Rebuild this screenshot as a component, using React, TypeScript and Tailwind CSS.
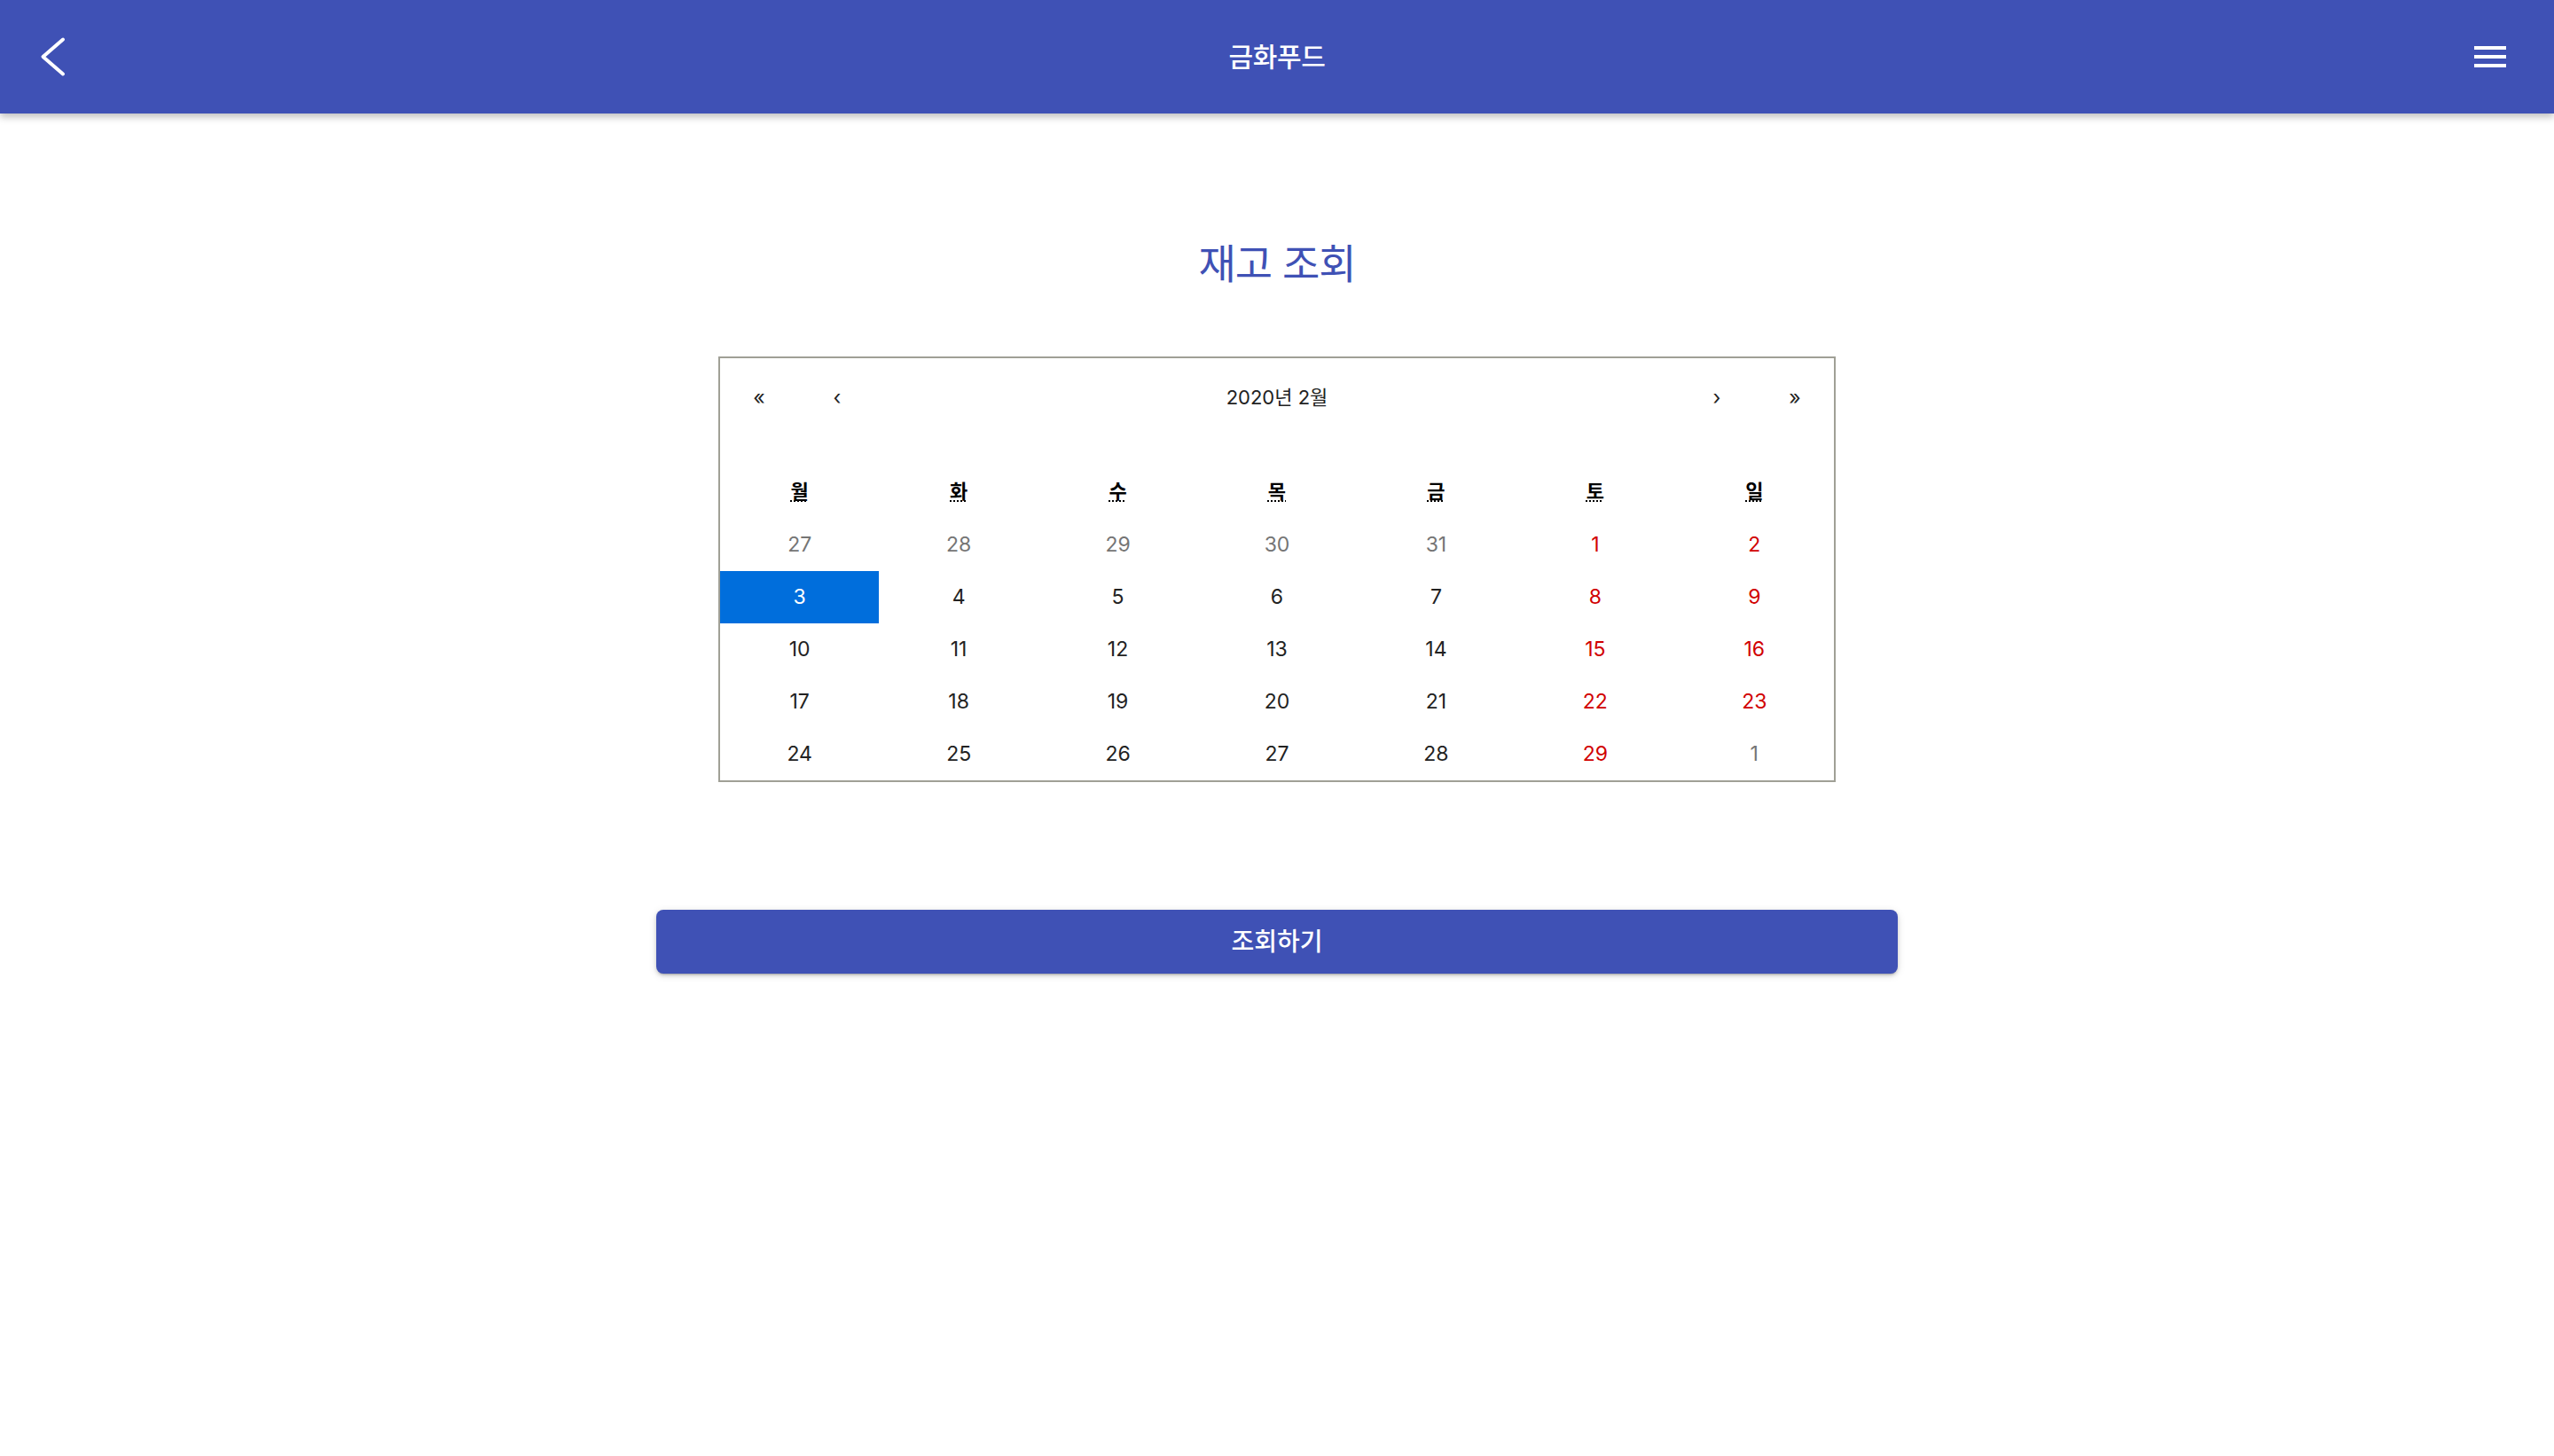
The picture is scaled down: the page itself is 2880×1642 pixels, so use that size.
import React, { useState } from 'react';

const weekdays = ['월', '화', '수', '목', '금', '토', '일'];
const weekdayFull = ['월요일', '화요일', '수요일', '목요일', '금요일', '토요일', '일요일'];

interface Day {
  date: number;
  inMonth: boolean;
}

// 2020년 2월, 월요일 시작
const buildDays = (): Day[] => {
  const days: Day[] = [];
  [27, 28, 29, 30, 31].forEach(d => days.push({ date: d, inMonth: false }));
  for (let d = 1; d <= 29; d++) days.push({ date: d, inMonth: true });
  days.push({ date: 1, inMonth: false });
  return days;
};

const font = { fontFamily: 'Inter, "Noto Sans CJK KR", sans-serif' };

const App: React.FC = () => {
  const [selected, setSelected] = useState(3);
  const days = buildDays();

  return (
    <div className="min-h-screen bg-white" style={font}>
      <header className="relative z-10 grid h-[128px] grid-cols-[1fr_auto_1fr] items-center bg-[#3f51b5] pl-[36px] pr-[48px] text-white shadow-[0_4px_8px_rgba(0,0,0,0.25)]">
        <button className="flex h-[48px] w-[48px] items-center justify-center justify-self-start">
          <svg width="48" height="48" viewBox="0 0 48 48" fill="none">
            <polyline points="35,4.5 12.5,24 35,43.5" stroke="white" strokeWidth="4" strokeLinecap="round" strokeLinejoin="round" />
          </svg>
        </button>
        <h1 className="ml-[12px] text-[30px] font-medium leading-none tracking-[-0.3px]">금화푸드</h1>
        <button className="flex h-[48px] w-[48px] items-center justify-center justify-self-end">
          <svg width="48" height="48" viewBox="0 0 48 48" fill="white">
            <rect x="6" y="12" width="36" height="4" />
            <rect x="6" y="22" width="36" height="4" />
            <rect x="6" y="32" width="36" height="4" />
          </svg>
        </button>
      </header>

      <main className="flex flex-col items-center">
        <h2 className="mt-[142px] text-[46px] leading-[55px] tracking-[-1px] text-[#3f51b5]">재고 조회</h2>

        <div className="mt-[77px] w-[1260px] border-2 border-[#a0a096] bg-white text-[23px] leading-none text-[#222]">
          <div className="mb-[32px] flex h-[88px] items-center">
            <button className="h-full w-[88px]">«</button>
            <button className="h-full w-[88px]">‹</button>
            <button className="h-full flex-1 text-[22px]">2020년 2월</button>
            <button className="h-full w-[88px]">›</button>
            <button className="h-full w-[88px]">»</button>
          </div>

          <div className="grid h-[61px] grid-cols-7 items-center pb-[2px]">
            {weekdays.map((w, i) => (
              <div key={w} className="text-center text-[22px] font-bold text-black">
                <abbr title={weekdayFull[i]} className="underline decoration-dotted decoration-2 underline-offset-[3px]">
                  {w}
                </abbr>
              </div>
            ))}
          </div>

          <div className="grid grid-cols-7">
            {days.map((d, i) => {
              const col = i % 7;
              const isSelected = d.inMonth && d.date === selected;
              let color = 'text-[#222]';
              if (!d.inMonth) color = 'text-[#757575]';
              else if (col >= 5) color = 'text-[#d10000]';
              if (isSelected) color = 'text-white bg-[#006edc]';
              return (
                <button
                  key={i}
                  onClick={() => d.inMonth && setSelected(d.date)}
                  className={`flex h-[59px] items-center justify-center ${color}`}
                >
                  {d.date}
                </button>
              );
            })}
          </div>
        </div>

        <button className="mt-[144px] h-[72px] w-[1400px] rounded-[8px] bg-[#3f51b5] text-[28px] font-medium text-white shadow-[0_3px_2px_-2px_rgba(0,0,0,0.2),0_2px_4px_0_rgba(0,0,0,0.14),0_2px_10px_0_rgba(0,0,0,0.12)]">
          조회하기
        </button>
      </main>
    </div>
  );
};

export default App;
